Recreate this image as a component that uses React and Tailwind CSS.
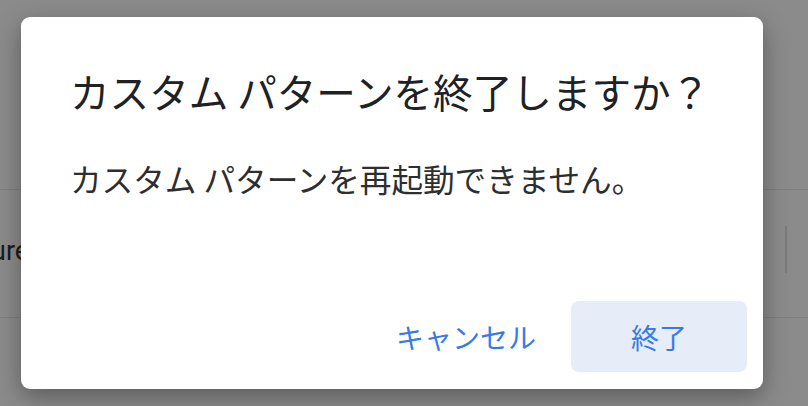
import React from "react";

const jp = { fontFamily: '"Noto Sans CJK JP", "Noto Sans", sans-serif' };

const App = () => {
  return (
    <div className="relative w-[808px] h-[406px] overflow-hidden bg-[#8b8b8c]" style={jp}>
      {/* Dimmed page behind the scrim */}
      <div className="flex flex-col pt-[189px]">
        <div className="h-[129px] border-t border-b border-[#7e7e80] flex items-center justify-between">
          <span className="text-[27px] text-[#1c1c1d] -ml-[9px] pb-[4px]" style={{ fontFamily: "Roboto, sans-serif" }}>
            ure
          </span>
          <div className="w-[2px] h-[47px] bg-[#7a7a7b] mr-[21px] mb-[8px]" />
        </div>
      </div>

      {/* Dialog */}
      <div className="absolute left-[21px] top-[17px] w-[742px] h-[372px] bg-white rounded-[9px] shadow-[0_8px_24px_rgba(0,0,0,0.35)] flex flex-col">
        <div className="px-[49px] pt-[50px]">
          <h2 className="text-[39.6px] leading-[48px] text-[#202124] font-normal">
            カスタム パターンを終了しますか？
          </h2>
          <p className="mt-[43px] text-[31.6px] leading-[40px] text-[#2d2e30]">
            カスタム パターンを再起動できません。
          </p>
        </div>
        <div className="mt-auto flex justify-end items-center gap-[15px] pr-[16px] pb-[17px]">
          <button className="h-[71px] px-[20px] rounded-[8px] text-[28px] text-[#3a7be2]">
            キャンセル
          </button>
          <button className="h-[71px] w-[176px] rounded-[8px] bg-[#e6edf9] text-[28px] text-[#3a7be2]">
            終了
          </button>
        </div>
      </div>
    </div>
  );
};

export default App;
